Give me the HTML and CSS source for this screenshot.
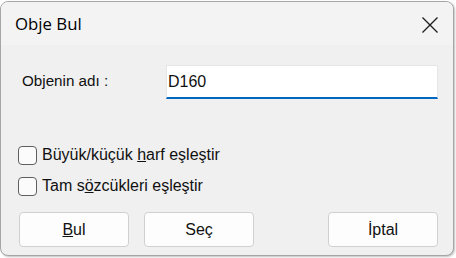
FILE: index.html
```html
<!DOCTYPE html>
<html lang="tr">
<head>
<meta charset="utf-8">
<title>Obje Bul</title>
<link rel="stylesheet" href="styles.css">
</head>
<body>
<div class="desk">
  <div class="dialog">
    <div class="titlebar">
      <span class="title">Obje Bul</span>
      <span class="close" aria-label="Kapat">
        <svg width="16" height="16" viewBox="0 0 16 16"><path d="M0.5 0.5 L15.5 15.5 M15.5 0.5 L0.5 15.5" stroke="#1b1b1b" stroke-width="1.3" fill="none"/></svg>
      </span>
    </div>
    <div class="content">
      <div class="row-name">
        <label class="lbl" for="objname">Objenin adı :</label>
        <input id="objname" class="field" type="text" value="D160">
      </div>
      <div class="checks">
        <div class="check"><span class="box"></span><span class="ctext">Büyük/küçük <u>h</u>arf eşleştir</span></div>
        <div class="check"><span class="box"></span><span class="ctext">Tam s<u>ö</u>zcükleri eşleştir</span></div>
      </div>
      <div class="buttons">
        <div class="left-buttons">
          <button class="btn"><u>B</u>ul</button>
          <button class="btn">Seç</button>
        </div>
        <button class="btn">İptal</button>
      </div>
    </div>
  </div>
</div>
</body>
</html>
```
FILE: styles.css
```css
html, body {
  margin: 0;
  padding: 0;
  background: #ffffff;
}
.desk {
  width: 456px;
  height: 258px;
  padding: 1px 0 0 0;
  box-sizing: border-box;
}
.dialog {
  width: 454px;
  height: 255px;
  box-sizing: border-box;
  border: 1px solid #a6a6a6;
  border-radius: 8px;
  overflow: hidden;
  background: #f0f0f0;
  display: flex;
  flex-direction: column;
  box-shadow: 1px 1px 2px rgba(0,0,0,0.25);
}
.titlebar {
  height: 43px;
  flex: none;
  background: #f3f3f3;
  display: flex;
  align-items: center;
  justify-content: space-between;
  padding: 0 15px 0 14px;
}
.title {
  font-family: "Open Sans", "Noto Sans", sans-serif;
  font-size: 16.8px;
  color: #000;
}
.close {
  display: flex;
  width: 16px;
  height: 16px;
  margin-top: 2px;
}
.content {
  flex: 1;
  display: flex;
  flex-direction: column;
  padding: 20px 15px 0 17px;
  font-family: "Liberation Sans", Arial, sans-serif;
  font-size: 16px;
  color: #111;
}
.row-name {
  display: flex;
  align-items: flex-start;
  height: 34px;
}
.lbl {
  width: 145px;
  padding: 7px 0 0 4px;
  font-size: 15.2px;
}
.field {
  width: 274px;
  height: 34px;
  box-sizing: border-box;
  margin: 0;
  border: 1px solid #e6e6e6;
  border-bottom: 2px solid #0067c0;
  background: #ffffff;
  padding: 1px 2px 0 1px;
  font-family: "Liberation Sans", Arial, sans-serif;
  font-size: 16px;
  color: #111;
  outline: none;
  border-radius: 0;
}
.checks {
  margin-top: 47px;
  display: flex;
  flex-direction: column;
  gap: 12px;
}
.check {
  display: flex;
  align-items: center;
  height: 19px;
  gap: 5px;
}
.box {
  width: 19px;
  height: 19px;
  box-sizing: border-box;
  border: 1px solid #5f5f5f;
  border-radius: 4px;
  background: #fbfbfb;
}
.ctext {
  line-height: 19px;
  margin-top: -2px;
}
.buttons {
  margin-top: 16px;
  display: flex;
  justify-content: space-between;
  padding-left: 1px;
}
.left-buttons {
  display: flex;
  gap: 15px;
}
.btn {
  width: 110px;
  height: 35px;
  box-sizing: border-box;
  border: 1px solid #d0d0d0;
  border-radius: 4px;
  background: #fdfdfd;
  font-family: "Liberation Sans", Arial, sans-serif;
  font-size: 16px;
  color: #111;
  padding: 0;
  margin: 0;
}
```
